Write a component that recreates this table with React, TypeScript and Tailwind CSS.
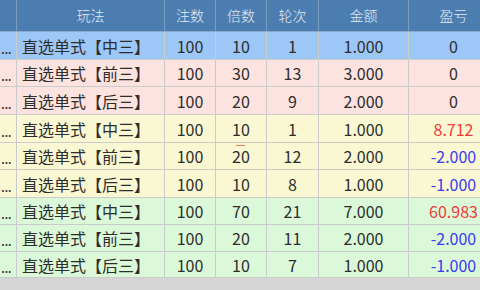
import React from 'react'

interface Row {
  play: string
  count: number
  times: number
  round: number
  amount: string
  profit: string
  tone: 'blue' | 'pink' | 'yellow' | 'green'
  h: string
  mark?: boolean
}

const ROWS: Row[] = [
  { play: '直选单式【中三】', count: 100, times: 10, round: 1, amount: '1.000', profit: '0', tone: 'blue', h: 'h-[28px]' },
  { play: '直选单式【前三】', count: 100, times: 30, round: 13, amount: '3.000', profit: '0', tone: 'pink', h: 'h-[27px]' },
  { play: '直选单式【后三】', count: 100, times: 20, round: 9, amount: '2.000', profit: '0', tone: 'pink', h: 'h-[28px]' },
  { play: '直选单式【中三】', count: 100, times: 10, round: 1, amount: '1.000', profit: '8.712', tone: 'yellow', h: 'h-[28px]' },
  { play: '直选单式【前三】', count: 100, times: 20, round: 12, amount: '2.000', profit: '-2.000', tone: 'yellow', h: 'h-[27px]', mark: true },
  { play: '直选单式【后三】', count: 100, times: 10, round: 8, amount: '1.000', profit: '-1.000', tone: 'yellow', h: 'h-[28px]' },
  { play: '直选单式【中三】', count: 100, times: 70, round: 21, amount: '7.000', profit: '60.983', tone: 'green', h: 'h-[27px]' },
  { play: '直选单式【前三】', count: 100, times: 20, round: 11, amount: '2.000', profit: '-2.000', tone: 'green', h: 'h-[27px]' },
  { play: '直选单式【后三】', count: 100, times: 10, round: 7, amount: '1.000', profit: '-1.000', tone: 'green', h: 'h-[26px]' },
]

const TONE = {
  blue: 'bg-[#9dc7f7]',
  pink: 'bg-[#fde3df]',
  yellow: 'bg-[#f9f8d3]',
  green: 'bg-[#dbf9d8]',
}

const profitColor = (p: string) => {
  if (p === '0') return 'text-[#2d2d2d]'
  if (p.startsWith('-')) return 'text-[#3a3af0]'
  return 'text-[#f03a3a]'
}

const HEAD = [
  { label: '', w: 'w-[17px]' },
  { label: '玩法', w: 'w-[148px]' },
  { label: '注数', w: 'w-[51px]' },
  { label: '倍数', w: 'w-[51px]' },
  { label: '轮次', w: 'w-[52px]' },
  { label: '金额', w: 'w-[90px]' },
  { label: '盈亏', w: 'w-[90px]' },
]

export default function App() {
  return (
    <div
      className="w-[480px] h-[290px] overflow-hidden bg-[#d5d5d5]"
      style={{ fontFamily: '"Noto Sans CJK SC", "Noto Sans", sans-serif' }}
    >
      <div className="w-[499px]">
        {/* Header */}
        <div className="flex h-[32px] bg-[#4b7db0] border-b border-[#8aa9c8]">
          {HEAD.map((h, i) => (
            <div
              key={i}
              className={`${h.w} shrink-0 flex items-center justify-center border-r border-[#7a9cc0] text-[14px] text-[#e3ebf3] font-light`}
            >
              {h.label}
            </div>
          ))}
        </div>

        {/* Rows */}
        {ROWS.map((r, i) => (
          <div key={i} className={`flex ${r.h} ${TONE[r.tone]} border-b border-[#cbcbcb] text-[16px] text-[#2d2d2d]`}>
            <div className="w-[17px] shrink-0 flex items-center justify-start pl-[1px] pt-[4px] border-r border-[#cbcbcb] text-[14px] tracking-[-0.5px] leading-none">
              ...
            </div>
            <div className="w-[148px] shrink-0 flex items-center pl-[5px] border-r border-[#cbcbcb] whitespace-nowrap">
              {r.play}
            </div>
            <div className="w-[51px] shrink-0 flex items-center justify-center border-r border-[#cbcbcb]">
              {r.count}
            </div>
            <div className="relative w-[51px] shrink-0 flex items-center justify-center border-r border-[#cbcbcb]">
              {r.mark && <span className="absolute left-[20px] top-[2px] w-[9px] h-px bg-[#f27a6a]" />}
              {r.times}
            </div>
            <div className="w-[52px] shrink-0 flex items-center justify-center border-r border-[#cbcbcb]">
              {r.round}
            </div>
            <div className="w-[90px] shrink-0 flex items-center justify-center border-r border-[#cbcbcb]">
              {r.amount}
            </div>
            <div className={`w-[90px] shrink-0 flex items-center justify-center border-r border-[#cbcbcb] ${profitColor(r.profit)}`}>
              {r.profit}
            </div>
          </div>
        ))}
      </div>
    </div>
  )
}
